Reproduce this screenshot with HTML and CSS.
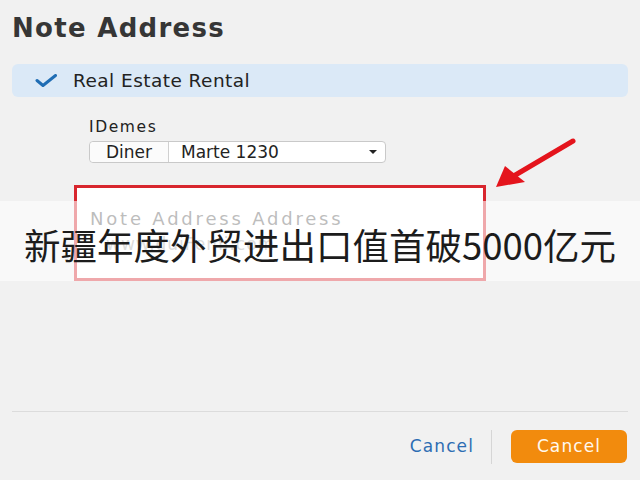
FILE: index.html
```html
<!DOCTYPE html>
<html lang="en">
<head>
<meta charset="utf-8">
<title>Note Address</title>
<link rel="stylesheet" href="styles.css">
</head>
<body>
<div class="dialog">
  <h1 class="title">Note Address</h1>
  <div class="choice">
    <svg class="check" width="22" height="13" viewBox="0 0 22 13"><path d="M2 6.5 L8 11.5 L20.5 1.5" fill="none" stroke="#1f6db4" stroke-width="3" stroke-linecap="round" stroke-linejoin="round"/></svg>
    <span class="choice-text">Real Estate Rental</span>
  </div>
  <div class="fields">
    <div class="label">IDemes</div>
    <div class="select">
      <span class="seg">Diner</span>
      <span class="val">Marte 1230</span>
      <span class="caret"></span>
    </div>
  </div>
  <div class="notebox">
    <div class="ph">Note Address Address</div>
    <div class="ph2">www.duiFemi.com</div>
  </div>
  <div class="spacer"></div>
  <div class="footer">
    <span class="link">Cancel</span>
    <span class="divider"></span>
    <span class="btn">Cancel</span>
  </div>
</div>
<svg class="arrow" width="640" height="480" viewBox="0 0 640 480">
  <line x1="573" y1="141" x2="512" y2="177" stroke="#e4141c" stroke-width="5" stroke-linecap="round"/>
  <polygon points="496,187 505,166 525,182" fill="#e4141c"/>
</svg>
<div class="caption">新疆年度外贸进出口值首破5000亿元</div>
</body>
</html>
```

FILE: styles.css
```css
html, body {
  margin: 0;
  padding: 0;
}
body {
  width: 640px;
  height: 480px;
  background: #f1f1f1;
  font-family: "DejaVu Sans", "Liberation Sans", sans-serif;
  color: #222;
  position: relative;
  overflow: hidden;
}
.dialog {
  box-sizing: border-box;
  height: 480px;
  padding: 0 12px;
  display: flex;
  flex-direction: column;
}
.title {
  margin: 0;
  padding-top: 13px;
  font-size: 26px;
  line-height: 30px;
  font-weight: bold;
  letter-spacing: 1.3px;
  color: #363636;
}
.choice {
  margin-top: 21px;
  height: 33px;
  background: #dbe9f7;
  border-radius: 6px;
  display: flex;
  align-items: center;
  padding-left: 23px;
  gap: 16px;
}
.choice-text {
  font-size: 18.5px;
  letter-spacing: 0.45px;
  color: #222;
}
.fields {
  padding-left: 77px;
}
.label {
  margin-top: 20px;
  font-size: 15.5px;
  line-height: 20px;
  letter-spacing: 1.6px;
}
.select {
  margin-top: 4px;
  box-sizing: border-box;
  width: 297px;
  height: 22px;
  background: #fff;
  border: 1px solid #c9c9c9;
  border-radius: 4px;
  display: flex;
  align-items: center;
  font-size: 17px;
  line-height: 20px;
}
.seg {
  box-sizing: border-box;
  width: 79px;
  height: 100%;
  border-right: 1px solid #d0d0d0;
  text-align: center;
  background: #fbfbfb;
  border-radius: 4px 0 0 4px;
}
.val {
  padding-left: 12px;
  flex: 1;
}
.caret {
  width: 0;
  height: 0;
  border-left: 4px solid transparent;
  border-right: 4px solid transparent;
  border-top: 4px solid #222;
  margin-right: 8px;
}
.notebox {
  margin-top: 22px;
  margin-left: 62px;
  box-sizing: border-box;
  width: 412px;
  height: 96px;
  background: #fff;
  border: 3px solid #d8262e;
  padding: 20px 0 0 13px;
}
.ph {
  font-size: 18px;
  line-height: 22px;
  letter-spacing: 2.8px;
  color: #5a5a5a;
}
.ph2 {
  margin-left: 16px;
  margin-top: 3px;
  font-size: 17px;
  line-height: 22px;
  letter-spacing: 1px;
  color: #a8a8a8;
}
.spacer {
  flex: 1;
}
.footer {
  height: 69px;
  border-top: 1px solid #dcdcdc;
  display: flex;
  justify-content: flex-end;
  align-items: flex-start;
  padding-top: 18px;
  padding-right: 1px;
  box-sizing: border-box;
}
.link {
  margin-top: 6px;
  font-size: 17px;
  line-height: 20px;
  letter-spacing: 1.1px;
  color: #2d6db3;
}
.divider {
  width: 1px;
  height: 34px;
  background: #d6d6d6;
  margin: 0 19px 0 17px;
}
.btn {
  box-sizing: border-box;
  width: 116px;
  height: 33px;
  border-radius: 6px;
  background: #f28b0d;
  color: #fff8ee;
  font-size: 17px;
  line-height: 33px;
  letter-spacing: 1.1px;
  text-align: center;
}
.arrow {
  position: absolute;
  top: 0;
  left: 0;
  pointer-events: none;
}
.caption {
  position: absolute;
  left: 0;
  right: 0;
  top: 201px;
  height: 80px;
  box-sizing: border-box;
  padding-top: 6px;
  background: rgba(255, 255, 255, 0.6);
  display: flex;
  align-items: center;
  justify-content: center;
  font-family: "Noto Sans CJK SC", sans-serif;
  font-size: 36.5px;
  color: #1c1c1c;
}
```
